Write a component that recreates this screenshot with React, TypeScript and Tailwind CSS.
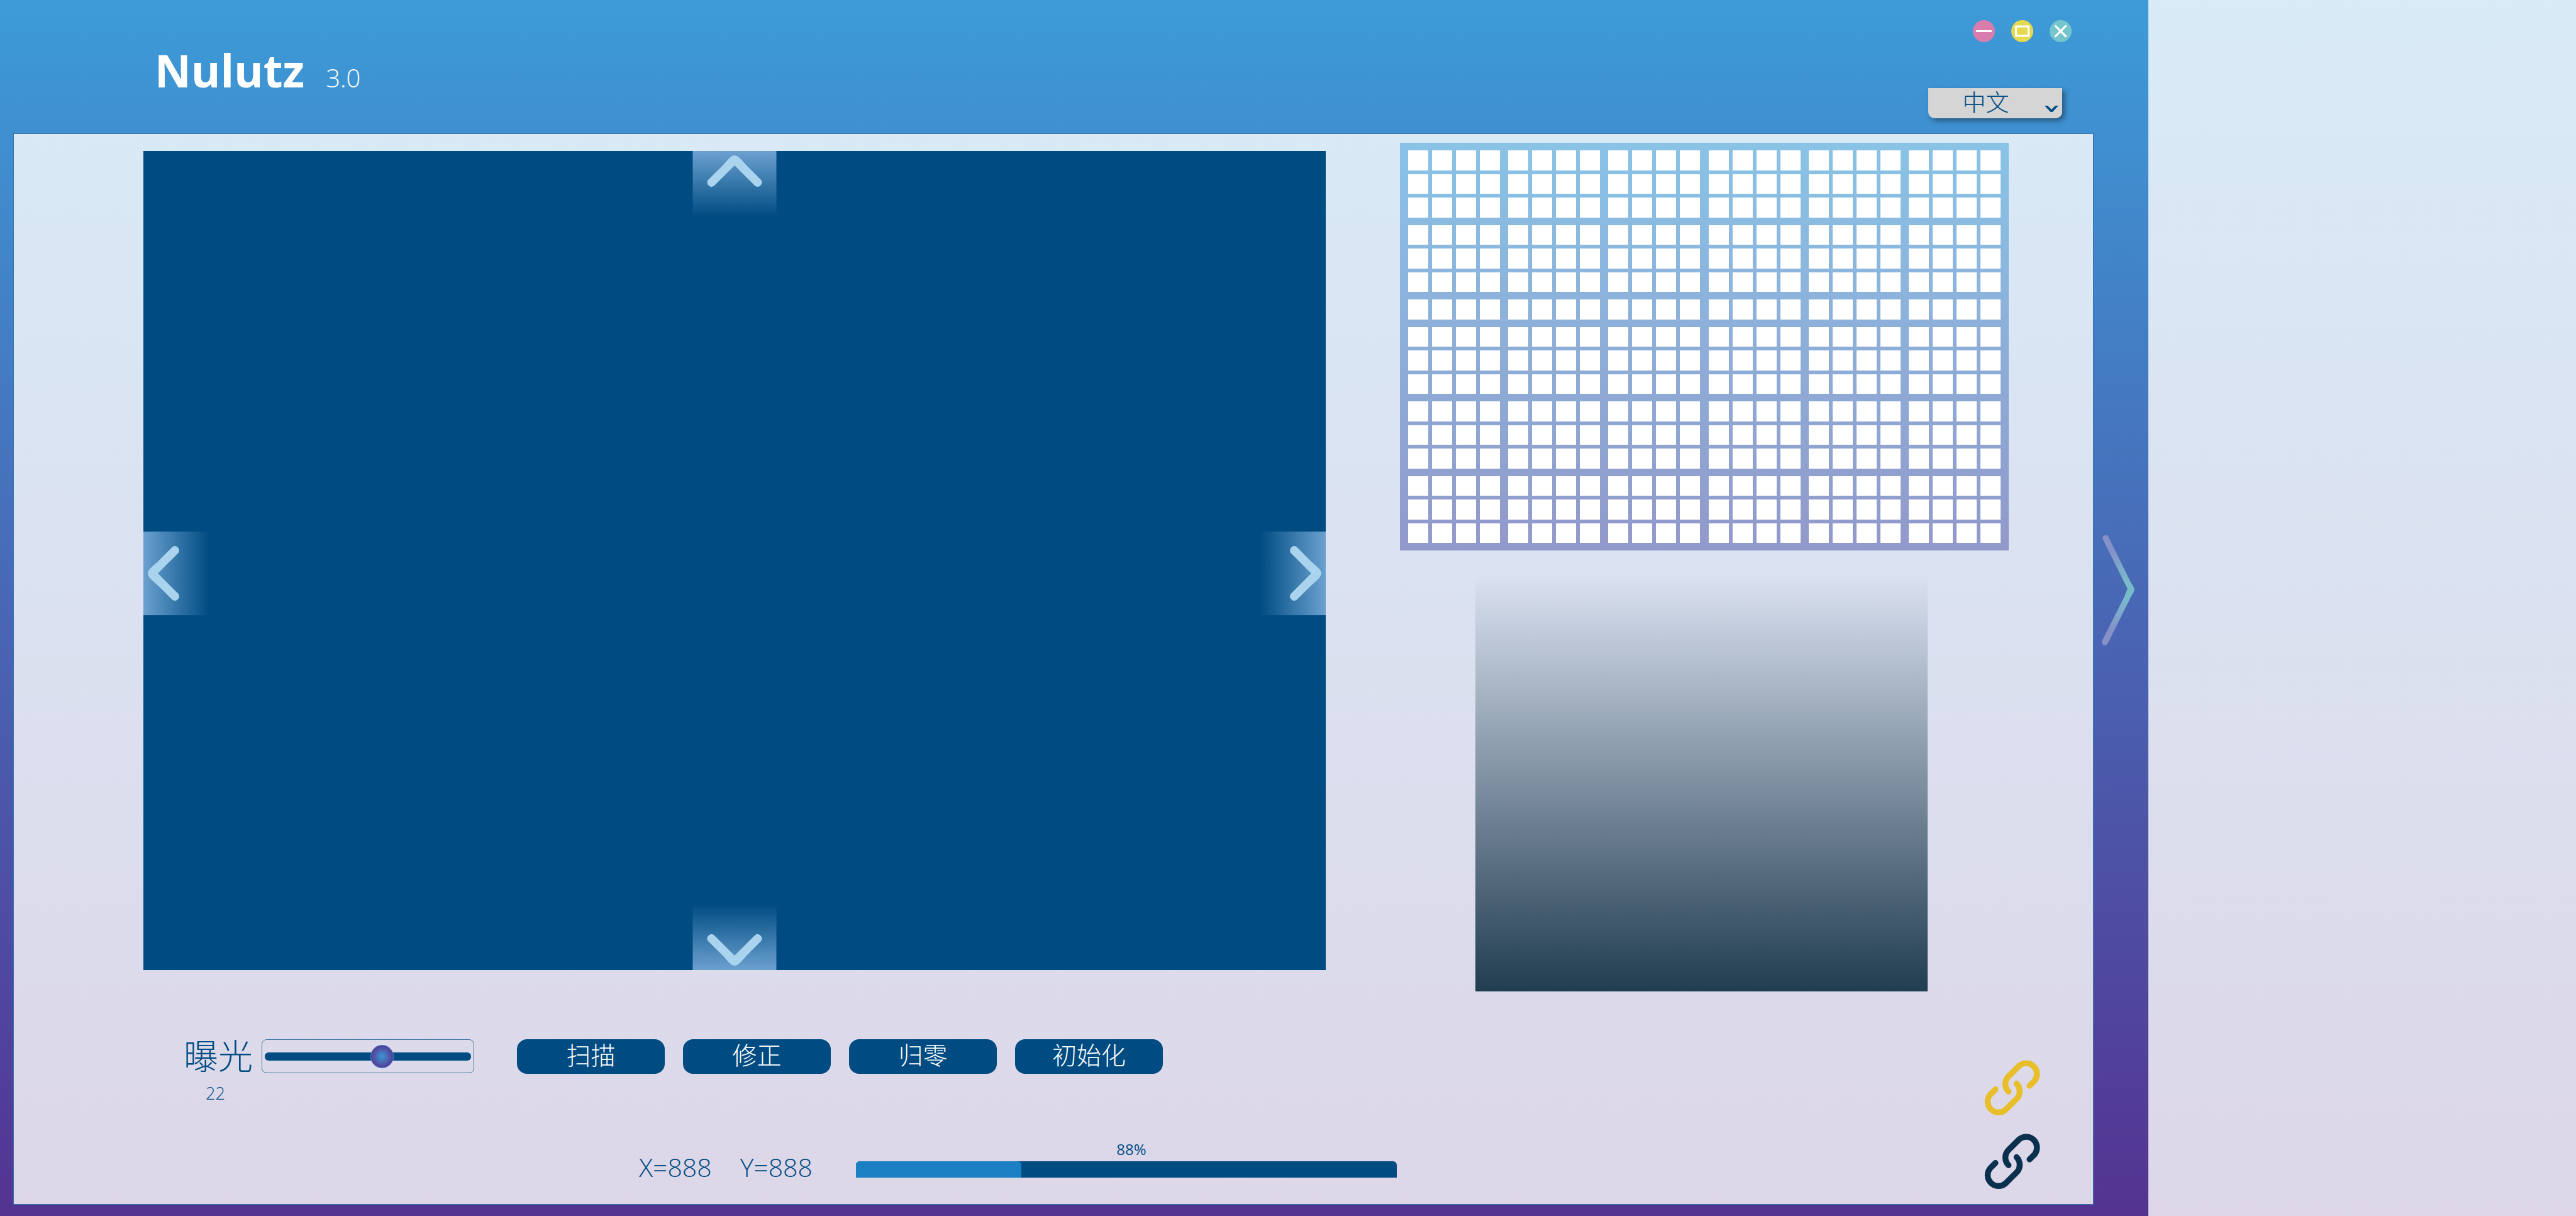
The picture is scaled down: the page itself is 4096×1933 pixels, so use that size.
import { useState } from "react";

const rowGroups = [3, 3, 1, 3, 3, 3];
const columnGroups = [4, 4, 4, 4, 4, 4];

const arrowPlacement = {
  up: "left-1/2 top-0 h-[104px] w-[133px] -translate-x-1/2 bg-linear-to-b/srgb",
  down: "left-1/2 bottom-0 h-[104px] w-[133px] -translate-x-1/2 bg-linear-to-t/srgb",
  left: "left-0 top-[605px] h-[133px] w-[104px] bg-linear-to-r/srgb",
  right: "right-0 top-[605px] h-[133px] w-[104px] bg-linear-to-l/srgb",
};

const arrowGeometry = {
  up: { viewBox: "0 0 644 504", transform: "" },
  down: { viewBox: "0 0 644 504", transform: "matrix(1 0 0 -1 0 504)" },
  left: { viewBox: "0 0 504 644", transform: "matrix(0 1 1 0 0 0)" },
  right: { viewBox: "0 0 504 644", transform: "matrix(0 1 -1 0 504 0)" },
};

type Direction = keyof typeof arrowPlacement;

function MoveButton({ direction, label }: { direction: Direction; label: string }) {
  const { viewBox, transform } = arrowGeometry[direction];
  return (
    <button
      type="button"
      aria-label={label}
      className={`absolute from-[#6ba1d0] to-[#004c82] ${arrowPlacement[direction]}`}
    >
      <svg viewBox={viewBox} className="size-full" fill="#aad3ee" aria-hidden="true">
        <path
          transform={transform}
          d="M118 223 L232 110 C275 62 295 34 322 34 C349 34 370 62 415 112 L526 223 A33 33 0 0 1 480 269 L322 112 L164 269 A33 33 0 0 1 118 223 Z"
        />
      </svg>
    </button>
  );
}

function WindowControls() {
  return (
    <div className="flex gap-[26px]">
      <button type="button" aria-label="最小化" className="size-[35px] rounded-full bg-[#d97dae]">
        <svg viewBox="0 0 56 56" stroke="#fff" strokeWidth="5" strokeLinecap="round" aria-hidden="true">
          <path d="M10 28H46" />
        </svg>
      </button>
      <button type="button" aria-label="最大化" className="size-[35px] rounded-full bg-[#e5d94f]">
        <svg viewBox="0 0 56 56" fill="none" stroke="#fff" strokeWidth="5" strokeLinejoin="round" aria-hidden="true">
          <rect x="12" y="16" width="32" height="24" />
        </svg>
      </button>
      <button type="button" aria-label="关闭" className="size-[35px] rounded-full bg-[#75c6cc]">
        <svg viewBox="0 0 56 56" stroke="#fff" strokeWidth="5" strokeLinecap="round" aria-hidden="true">
          <path d="M15 15L41 41M41 15L15 41" />
        </svg>
      </button>
    </div>
  );
}

function LinkButton({ label, color }: { label: string; color: string }) {
  return (
    <button type="button" aria-label={label} className={`size-[90px] ${color}`}>
      <svg
        viewBox="158 132 439 439"
        className="size-full"
        fill="none"
        stroke="currentColor"
        strokeWidth="46"
        strokeLinecap="round"
        aria-hidden="true"
      >
        <path d="M510 337L549 298A84 84 0 0 0 431 180L346 264A84 84 0 0 0 347 382" />
        <path d="M245 365L206 404A84 84 0 0 0 324 523L409 438A84 84 0 0 0 409 320" />
      </svg>
    </button>
  );
}

function WellPlate() {
  return (
    <div className="flex h-[648px] w-[968px] flex-col gap-3 bg-linear-to-b/srgb from-[#89c3e6] to-[#9299ca] px-[13px] py-3">
      {rowGroups.map((rows, g) => (
        <div
          key={g}
          className={`flex flex-col gap-[6px] ${rows === 3 ? "grow-3 basis-3" : "grow basis-0"}`}
        >
          {Array.from({ length: rows }, (_, r) => (
            <div key={r} className="flex flex-1 justify-between">
              {columnGroups.map((columns, c) => (
                <div key={c} className="flex gap-[6px]">
                  {Array.from({ length: columns }, (_, i) => (
                    <div key={i} className="w-8 bg-white" />
                  ))}
                </div>
              ))}
            </div>
          ))}
        </div>
      ))}
    </div>
  );
}

export default function App() {
  const [exposure, setExposure] = useState(22);
  const loaded = 30.6;

  return (
    <div className="flex min-h-screen bg-linear-to-b/srgb from-[#d9ebf7] to-[#ddd7e8] font-['Open_Sans','Noto_Sans_CJK_SC',sans-serif] font-light text-[#004c82]">
      <div className="flex w-[83.4%] flex-col bg-linear-to-b/srgb from-[#3d9bd8] to-[#543391] pb-[19px]">
        <header className="flex h-[213px] justify-between pl-[246px] pr-[122px]">
          <div className="flex items-baseline gap-[34px] pt-[76px] text-white">
            <h1 className="text-[71px] font-bold leading-none">Nulutz</h1>
            <span className="text-[40px] leading-none">3.0</span>
          </div>
          <div className="flex flex-col items-end gap-[73px] pt-8">
            <WindowControls />
            <div className="relative mr-[15px]">
              <select
                aria-label="语言"
                defaultValue="zh"
                className="h-12 w-[213px] appearance-none rounded-b-[10px] bg-[#d5d5d5] pb-[3px] pr-[30px] text-center text-[37px] leading-none shadow-[4px_4px_8px_rgba(0,0,0,0.4)] [text-align-last:center]"
              >
                <option value="zh">中文</option>
              </select>
              <svg
                viewBox="0 0 36 17"
                className="pointer-events-none absolute bottom-[10px] right-[6px] w-[22px]"
                fill="currentColor"
                aria-hidden="true"
              >
                <path d="M0 0H8L18 10L28 0H36L20 17H16Z" />
              </svg>
            </div>
          </div>
        </header>

        <div className="flex flex-1">
          <main className="ml-[22px] flex flex-1 bg-linear-to-b/srgb from-[#d9e9f6] to-[#ddd7e8] shadow-[0_0_0_1px_#3674ac]">
            <section className="flex flex-1 flex-col pb-[38px] pl-[206px] pt-[27px]">
              <div className="relative mr-[118px] flex-1 bg-[#004c82]">
                <MoveButton direction="up" label="上移" />
                <MoveButton direction="down" label="下移" />
                <MoveButton direction="left" label="左移" />
                <MoveButton direction="right" label="右移" />
              </div>

              <div className="ml-16 mt-[109px] flex h-14 items-center">
                <label htmlFor="exposure" className="pb-[3px] text-[55px] leading-none">
                  曝光
                </label>
                <div className="ml-[14px] flex h-[54px] w-[338px] items-center rounded-lg border border-[#3f78a5] px-1">
                  <input
                    id="exposure"
                    type="range"
                    min={0}
                    max={38}
                    value={exposure}
                    onChange={(e) => setExposure(Number(e.target.value))}
                    className="h-[37px] w-full appearance-none bg-transparent [&::-webkit-slider-runnable-track]:h-[13px] [&::-webkit-slider-runnable-track]:rounded-md [&::-webkit-slider-runnable-track]:bg-[#004c82] [&::-webkit-slider-thumb]:-mt-3 [&::-webkit-slider-thumb]:size-[37px] [&::-webkit-slider-thumb]:appearance-none [&::-webkit-slider-thumb]:rounded-full [&::-webkit-slider-thumb]:border [&::-webkit-slider-thumb]:border-[#3688cc] [&::-webkit-slider-thumb]:bg-[radial-gradient(circle_closest-side,#3d97d5,#553c96)]"
                  />
                </div>
                <div className="ml-[68px] flex gap-[29px]">
                  {["扫描", "修正", "归零", "初始化"].map((name) => (
                    <button
                      key={name}
                      type="button"
                      className="h-[55px] w-[235px] rounded-2xl bg-[#004c82] pb-[6px] text-[39px] leading-none text-white"
                    >
                      {name}
                    </button>
                  ))}
                </div>
              </div>
              <output htmlFor="exposure" className="ml-[99px] mt-[11px] block h-10 text-[27px] leading-10">
                {exposure}
              </output>

              <div className="ml-[788px] mt-[53px] flex items-end">
                <span className="text-[41px] leading-none">X=888</span>
                <span className="ml-[45px] text-[41px] leading-none">Y=888</span>
                <div className="mb-1 ml-[69px] mr-[5px] flex-1">
                  <div id="progress-value" className="mb-[3px] pl-4 text-center text-[24px] font-normal leading-8">
                    88%
                  </div>
                  <div
                    role="progressbar"
                    aria-labelledby="progress-value"
                    aria-valuenow={88}
                    className="h-[26px] overflow-hidden rounded-t-md bg-[#004c82]"
                  >
                    <div className="h-full rounded-tr-md bg-[#1b7fc3]" style={{ width: `${loaded}%` }} />
                  </div>
                </div>
              </div>
            </section>

            <aside className="w-[1102px] shrink-0 pt-[14px]">
              <WellPlate />
              <div className="ml-[120px] mt-[38px] h-[663px] w-[719px] bg-linear-to-b/srgb from-[#dbe2f1] to-[#213d50]" />
              <div className="ml-[929px] mt-[108px] flex flex-col gap-[27px]">
                <LinkButton label="连接" color="text-[#e8be2a]" />
                <LinkButton label="断开" color="text-[#0a304d]" />
              </div>
            </aside>
          </main>

          <div className="w-[88px] pl-[14px] pt-[637px]">
            <button type="button" aria-label="展开" className="block w-[52px]">
              <svg viewBox="195 165 255 863" aria-hidden="true">
                <defs>
                  <radialGradient id="edge" gradientUnits="userSpaceOnUse" cx="380" cy="600" r="320">
                    <stop offset="0.2" stopColor="#78bccb" />
                    <stop offset="1" stopColor="#8592c9" />
                  </radialGradient>
                </defs>
                <path
                  fill="url(#edge)"
                  d="M203 200A24 24 0 0 1 245 178L420 534C440 568 449 578 449 592C449 608 440 620 420 653L241 1014A24 24 0 0 1 198 991L370 650C380 625 386 608 396 587Q390 580 376 548Z"
                />
              </svg>
            </button>
          </div>
        </div>
      </div>
    </div>
  );
}
